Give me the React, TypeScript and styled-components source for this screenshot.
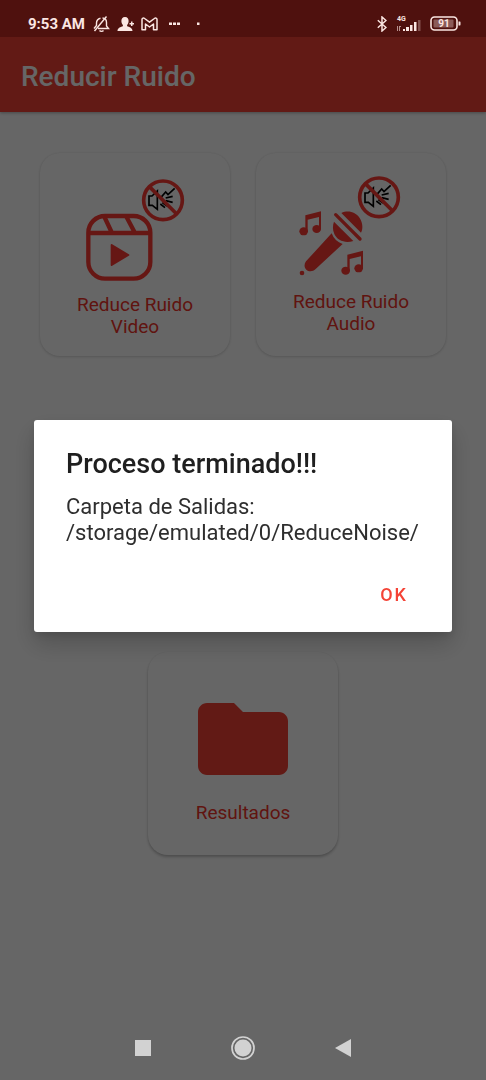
import React from 'react';
import styled, { createGlobalStyle } from 'styled-components';

const GlobalStyle = createGlobalStyle`
  * { box-sizing: border-box; }
  body {
    margin: 0;
    background: #fff;
    font-family: Roboto, "Liberation Sans", sans-serif;
  }
  button { font-family: inherit; cursor: pointer; }
`;

const RED = '#f44336';
const ICON_RED = '#ff3a34';

const Page = styled.div`
  min-height: 100vh;
  display: flex;
  flex-direction: column;
  background: #fff;
`;

const StatusBar = styled.div`
  position: relative;
  z-index: 2;
  display: flex;
  justify-content: space-between;
  align-items: center;
  height: 37px;
  padding: 10px 25px 0 28px;
  background: #4f110e;
  color: #fbe6e2;
`;

const StatusGroup = styled.div<{ $gap: number }>`
  display: flex;
  align-items: center;
  gap: ${(p) => p.$gap}px;
`;

const MoreIcons = styled.div`
  display: flex;
  align-items: center;
  gap: 17px;
  padding-left: 4px;
`;

const Clock = styled.span`
  font-size: 15px;
  font-weight: 700;
  line-height: 20px;
`;

const AppBar = styled.header`
  display: flex;
  align-items: center;
  height: 75px;
  padding: 4px 21px 0;
  background: ${RED};
  box-shadow: 0 1px 3px rgba(0, 0, 0, 0.3);
`;

const AppTitle = styled.h1`
  margin: 0;
  color: #fff;
  font-size: 28px;
  font-weight: 500;
  line-height: 32px;
`;

const Main = styled.main`
  flex: 1;
  display: flex;
  flex-direction: column;
  align-items: center;
  gap: 296px;
  padding: 41px 40px 0;
`;

const CardRow = styled.div`
  display: flex;
  justify-content: center;
  gap: 26px;
  width: 100%;
`;

const Card = styled.button<{ $raised?: boolean }>`
  display: flex;
  flex: 0 1 190px;
  flex-direction: column;
  align-items: center;
  justify-content: center;
  gap: 9px;
  min-height: 203px;
  padding: 9px 24px 8px;
  border: 0;
  border-radius: 20px;
  background: #fff;
  box-shadow: ${(p) =>
    p.$raised
      ? '0 2px 3px rgba(0, 0, 0, 0.24), 0 0 2px rgba(0, 0, 0, 0.06)'
      : '0 1px 3px rgba(0, 0, 0, 0.14), 0 0 2px rgba(0, 0, 0, 0.08)'};
`;

const CardLabel = styled.span`
  color: #f0342a;
  font-size: 19px;
  line-height: 22px;
  text-align: center;
`;

const Scrim = styled.div`
  position: fixed;
  inset: 0;
  z-index: 1;
  display: flex;
  align-items: center;
  justify-content: center;
  padding: 0 34px 28px;
  background: rgba(0, 0, 0, 0.6);
`;

const Dialog = styled.section`
  display: flex;
  flex-direction: column;
  width: 100%;
  max-width: 480px;
  padding: 28px 24px 15px 32px;
  border-radius: 3px;
  background: #fff;
  box-shadow: 0 12px 24px rgba(0, 0, 0, 0.2), 0 4px 8px rgba(0, 0, 0, 0.1);
`;

const DialogTitle = styled.h2`
  margin: 0 0 14px;
  color: #1f1f1f;
  font-size: 27px;
  font-weight: 500;
  line-height: 32px;
`;

const DialogText = styled.p`
  margin: 0 0 25px;
  color: #2e2e2e;
  font-size: 22px;
  line-height: 26px;
`;

const DialogAction = styled.button`
  align-self: flex-end;
  height: 46px;
  padding: 0 20px;
  border: 0;
  background: none;
  color: ${RED};
  font-size: 18px;
  font-weight: 500;
  letter-spacing: 2px;
`;

const NavBar = styled.nav`
  position: relative;
  z-index: 2;
  display: flex;
  justify-content: center;
  height: 64px;
`;

const NavButton = styled.button`
  display: flex;
  flex: 0 1 100px;
  align-items: center;
  justify-content: center;
  padding: 0;
  border: 0;
  background: none;
`;

const NoNoise = () => (
  <g fill="none">
    <g stroke="#000" strokeWidth="5">
      <path d="M222 78h9l16-15v55l-15-12h-10z" />
      <path d="M258 82l14-16 7 8 20-19M272 84l21-5M272 92l21 5M256 102l14 11M262 98l14 10" />
    </g>
    <g stroke={ICON_RED} strokeWidth="11">
      <circle cx="264" cy="91" r="58" />
      <path d="M223 50l82 82" />
    </g>
  </g>
);

const VideoIcon = () => (
  <svg width="110" height="113" viewBox="15 6 330 339" aria-hidden="true">
    <g fill="none" stroke={ICON_RED} strokeWidth="13">
      <rect x="40" y="138" width="186" height="188" rx="50" />
      <path d="M40 189h186M87 138l24 51M153 138l27 51" />
    </g>
    <path d="M110 225l50 30-50 30z" fill={ICON_RED} stroke={ICON_RED} strokeWidth="6" strokeLinejoin="round" />
    <NoNoise />
  </svg>
);

const Notes = ({ x, y }: { x: number; y: number }) => (
  <g transform={`translate(${x} ${y})`} fill={ICON_RED}>
    <ellipse cx="13" cy="60" rx="13" ry="12" />
    <ellipse cx="52" cy="53" rx="13" ry="12" />
    <path d="M18 12L65 0v54h-6V17L25 25v36h-7z" />
  </g>
);

const AudioIcon = () => (
  <svg width="110" height="107" viewBox="18 15 330 321" aria-hidden="true">
    <g fill={ICON_RED}>
      <path d="M154 129C174 119 198 126 209 144C219 160 219 178 213 188Z" />
      <path d="M132 155L190 213C164 221 142 211 133 192C127 179 128 166 132 155Z" />
      <path d="M125 190C131 206 142 217 158 222L77 297C68 306 56 305 49 299C42 292 42 282 48 274Z" />
      <circle cx="36" cy="309" r="7" />
    </g>
    <path d="M137 134l73 73" fill="none" stroke={ICON_RED} strokeWidth="10" strokeLinecap="round" />
    <Notes x={28} y={124} />
    <Notes x={154} y={242} />
    <g transform="translate(3 -9)">
      <NoNoise />
    </g>
  </svg>
);

const FolderIcon = () => (
  <svg width="108" height="108" viewBox="0 0 24 24" aria-hidden="true">
    <path fill={RED} d="M10 4H4c-1.1 0-2 .9-2 2v12c0 1.1.9 2 2 2h16c1.1 0 2-.9 2-2V8c0-1.1-.9-2-2-2h-8l-2-2z" />
  </svg>
);

const MutedBellIcon = () => (
  <svg width="18" height="18" viewBox="0 0 18 18" fill="none" stroke="currentColor" strokeWidth="1.4" aria-hidden="true">
    <path d="M6 13.500h10.500l-2-2.500V7.500C14.500 5 13 3.200 10.500 3M8.500 3.200C6 3.800 4.500 5.500 4.500 8v2.500L2 13.500M7.500 15.500c1 1.200 3 1.200 4 0M14.500 1.500L2.500 16" />
  </svg>
);

const PersonAddIcon = () => (
  <svg width="17" height="16" viewBox="0 0 17 16" fill="currentColor" aria-hidden="true">
    <path d="M8 1c2.600 0 3.600 1.800 3.600 4 0 1.700-.6 3-1.500 3.900v1.300c2.600.9 5.400 1.700 5.400 4.800H.5c0-3.100 2.800-3.900 5.400-4.800V8.900C5 8 4.400 6.700 4.400 5c0-2.200 1-4 3.600-4z" />
    <path d="M12.500 7H14V5.500h1.500V7H17v1.500h-1.500V10H14V8.500h-1.500z" />
  </svg>
);

const MailIcon = () => (
  <svg width="17" height="14" viewBox="0 0 17 14" fill="none" stroke="currentColor" strokeWidth="1.500" strokeLinejoin="round" aria-hidden="true">
    <path d="M1 12.800V2.500C1 1 2.500.6 3.600 1.500L8.500 5.200l4.900-3.700C14.500.6 16 1 16 2.500v10.300h-3.500V7l-4 3-4-3v5.800z" />
  </svg>
);

const DotsIcon = () => (
  <svg width="11" height="4" viewBox="0 0 11 4" fill="currentColor" aria-hidden="true">
    <path d="M0 .5h3v2.500H0zM4 .5h3v2.500H4zM8 .5h3v2.500H8z" />
  </svg>
);

const DotIcon = () => (
  <svg width="3" height="4" viewBox="0 0 3 4" fill="currentColor" aria-hidden="true">
    <path d="M0 .5h2.500V3H0z" />
  </svg>
);

const BluetoothIcon = () => (
  <svg width="10" height="16" viewBox="0 0 10 16" fill="none" stroke="currentColor" strokeWidth="1.500" aria-hidden="true">
    <path d="M.8 4.200L9 11.500 5 15V1l4 3.500L.8 11.800" />
  </svg>
);

const SignalIcon = () => (
  <svg width="25" height="18" viewBox="0 0 25 18" fill="currentColor" aria-hidden="true">
    <text x="1" y="6" fontSize="7" fontWeight="700">4G</text>
    <path d="M1 11h1v5H1zM3 11h2v1H4v4H3z" opacity=".6" />
    <path d="M7 14h2v2H7zM10 12h3v4h-3zM14 10h2.500v6H14zM18 7h2.500v9H18z" />
    <path d="M22 5h2.500v11H22z" opacity=".3" />
  </svg>
);

const BatteryIcon = () => (
  <svg width="31" height="15" viewBox="0 0 31 15" aria-hidden="true">
    <rect x="1" y="1" width="26" height="13" rx="3.500" fill="none" stroke="currentColor" strokeWidth="1.600" />
    <rect x="3.500" y="3.500" width="20" height="8" rx="1" fill="currentColor" opacity=".35" />
    <path d="M28.500 5.500h1c.8 0 1 .5 1 1v2c0 .5-.2 1-1 1h-1z" fill="currentColor" />
    <text x="14" y="11" fontSize="10" fontWeight="700" textAnchor="middle" fill="currentColor">91</text>
  </svg>
);

export default function App() {
  return (
    <>
      <GlobalStyle />
      <Page>
        <StatusBar>
          <StatusGroup $gap={7}>
            <Clock>9:53 AM</Clock>
            <MutedBellIcon />
            <PersonAddIcon />
            <MailIcon />
            <MoreIcons>
              <DotsIcon />
              <DotIcon />
            </MoreIcons>
          </StatusGroup>
          <StatusGroup $gap={9}>
            <BluetoothIcon />
            <SignalIcon />
            <BatteryIcon />
          </StatusGroup>
        </StatusBar>
        <AppBar>
          <AppTitle>Reducir Ruido</AppTitle>
        </AppBar>
        <Main>
          <CardRow>
            <Card type="button">
              <VideoIcon />
              <CardLabel>Reduce Ruido Video</CardLabel>
            </Card>
            <Card type="button">
              <AudioIcon />
              <CardLabel>Reduce Ruido Audio</CardLabel>
            </Card>
          </CardRow>
          <CardRow>
            <Card type="button" $raised>
              <FolderIcon />
              <CardLabel>Resultados</CardLabel>
            </Card>
          </CardRow>
        </Main>
        <NavBar>
          <NavButton type="button" aria-label="Recientes">
            <svg width="16" height="16" viewBox="0 0 16 16" aria-hidden="true">
              <path d="M0 0h16v16H0z" fill="#d2d2d2" />
            </svg>
          </NavButton>
          <NavButton type="button" aria-label="Inicio">
            <svg width="24" height="24" viewBox="0 0 24 24" aria-hidden="true">
              <circle cx="12" cy="12" r="11" fill="none" stroke="#d2d2d2" strokeWidth="1.700" />
              <circle cx="12" cy="12" r="8.500" fill="#d2d2d2" />
            </svg>
          </NavButton>
          <NavButton type="button" aria-label="Atrás">
            <svg width="16" height="18" viewBox="0 0 16 18" aria-hidden="true">
              <path d="M16 0v18L0 9z" fill="#d2d2d2" />
            </svg>
          </NavButton>
        </NavBar>
      </Page>
      <Scrim>
        <Dialog role="alertdialog" aria-modal="true" aria-labelledby="dialog-title" aria-describedby="dialog-text">
          <DialogTitle id="dialog-title">Proceso terminado!!!</DialogTitle>
          <DialogText id="dialog-text">
            Carpeta de Salidas:
            <br />
            /storage/emulated/0/ReduceNoise/
          </DialogText>
          <DialogAction type="button">OK</DialogAction>
        </Dialog>
      </Scrim>
    </>
  );
}
